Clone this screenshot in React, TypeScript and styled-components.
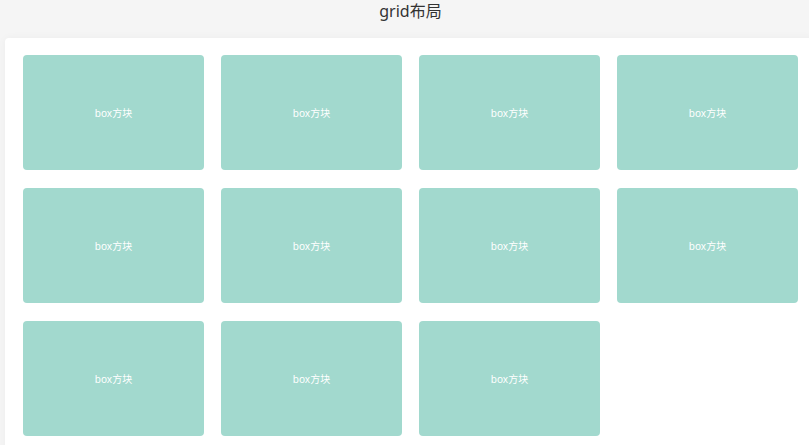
import React from "react";
import styled, { createGlobalStyle } from "styled-components";

const Global = createGlobalStyle`
  html, body {
    margin: 0;
    padding: 0;
    background: #f5f5f5;
    overflow: hidden;
    font-family: "Noto Sans", "Noto Sans CJK SC", sans-serif;
  }
`;

const Page = styled.div`
  width: 811px;
  padding-left: 5px;
`;

const Title = styled.h1`
  margin: 0;
  height: 38px;
  font-size: 16px;
  font-weight: 400;
  line-height: 22px;
  color: #333;
  text-align: center;
`;

const Card = styled.div`
  background: #fff;
  border-radius: 4px;
  padding: 17px 18px 18px;
  box-shadow: 0 0 8px rgba(0, 0, 0, 0.04);
`;

const Grid = styled.div`
  display: grid;
  grid-template-columns: repeat(4, 181px);
  grid-auto-rows: 115px;
  column-gap: 17px;
  row-gap: 18px;
`;

const Box = styled.div`
  background: #a2d9ce;
  border-radius: 4px;
  display: flex;
  align-items: center;
  justify-content: center;
  color: #fff;
  font-size: 10px;
`;

export default function App() {
  const items = Array.from({ length: 11 }, (_, i) => i);
  return (
    <>
      <Global />
      <Page>
        <Title>grid布局</Title>
        <Card>
          <Grid>
            {items.map((i) => (
              <Box key={i}>box方块</Box>
            ))}
          </Grid>
        </Card>
      </Page>
    </>
  );
}
